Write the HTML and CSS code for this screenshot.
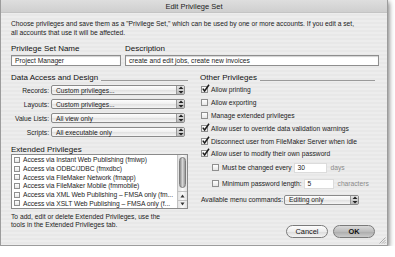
FILE: index.html
```html
<!DOCTYPE html>
<html lang="en">
<head>
  <meta charset="UTF-8">
  <title>Edit Privilege Set</title>
  <link rel="stylesheet" href="styles.css">
</head>
<body>
  <div class="window">
    <div class="titlebar">Edit Privilege Set</div>
    <div class="content">
      <p class="intro">Choose privileges and save them as a "Privilege Set," which can be used by one or more accounts. If you edit a set,<br>all accounts that use it will be affected.</p>

      <div class="names">
        <div class="field field--name">
          <span class="field__label">Privilege Set Name</span>
          <span class="field__box">Project Manager</span>
        </div>
        <div class="field field--desc">
          <span class="field__label">Description</span>
          <span class="field__box">create and edit jobs, create new invoices</span>
        </div>
      </div>

      <div class="columns">
        <div class="col col--left">
          <div class="section-head"><span>Data Access and Design</span><i class="section-head__rule"></i></div>
          <div class="popups">
            <div class="popup-row"><span class="popup-row__label">Records:</span><span class="select">Custom privileges...<b class="select__arrows"><svg width="6" height="8" viewBox="0 0 6 8"><path d="M3 0.5L5.5 3H0.5zM3 7.5L5.5 5H0.5z" fill="#222"/></svg></b></span></div>
            <div class="popup-row"><span class="popup-row__label">Layouts:</span><span class="select">Custom privileges...<b class="select__arrows"><svg width="6" height="8" viewBox="0 0 6 8"><path d="M3 0.5L5.5 3H0.5zM3 7.5L5.5 5H0.5z" fill="#222"/></svg></b></span></div>
            <div class="popup-row"><span class="popup-row__label">Value Lists:</span><span class="select">All view only<b class="select__arrows"><svg width="6" height="8" viewBox="0 0 6 8"><path d="M3 0.5L5.5 3H0.5zM3 7.5L5.5 5H0.5z" fill="#222"/></svg></b></span></div>
            <div class="popup-row"><span class="popup-row__label">Scripts:</span><span class="select">All executable only<b class="select__arrows"><svg width="6" height="8" viewBox="0 0 6 8"><path d="M3 0.5L5.5 3H0.5zM3 7.5L5.5 5H0.5z" fill="#222"/></svg></b></span></div>
          </div>

          <div class="section-head section-head--ext"><span>Extended Privileges</span></div>
          <div class="list">
            <div class="list__items">
              <div class="list__row"><span class="box"></span><span class="list__text">Access via Instant Web Publishing (fmiwp)</span></div>
              <div class="list__row"><span class="box"></span><span class="list__text">Access via ODBC/JDBC (fmxdbc)</span></div>
              <div class="list__row"><span class="box"></span><span class="list__text">Access via FileMaker Network (fmapp)</span></div>
              <div class="list__row"><span class="box"></span><span class="list__text">Access via FileMaker Mobile (fmmobile)</span></div>
              <div class="list__row"><span class="box"></span><span class="list__text">Access via XML Web Publishing – FMSA only (fm...</span></div>
              <div class="list__row"><span class="box"></span><span class="list__text">Access via XSLT Web Publishing – FMSA only (f...</span></div>
            </div>
            <div class="scroll">
              <div class="scroll__thumb"></div>
              <div class="scroll__btn"><svg width="5" height="4" viewBox="0 0 5 4"><path d="M2.5 0.5L4.5 3.5H0.5z" fill="#333"/></svg></div>
              <div class="scroll__btn"><svg width="5" height="4" viewBox="0 0 5 4"><path d="M2.5 3.5L4.5 0.5H0.5z" fill="#333"/></svg></div>
            </div>
          </div>
          <p class="note">To add, edit or delete Extended Privileges, use the<br>tools in the Extended Privileges tab.</p>
        </div>

        <div class="col col--right">
          <div class="section-head"><span>Other Privileges</span><i class="section-head__rule"></i></div>
          <div class="checks">
            <div class="check-row"><span class="box box--on"><svg width="9" height="9" viewBox="0 0 9 9"><path d="M1.8 4.6L3.6 7L8 0.8" fill="none" stroke="#1b1b1b" stroke-width="1.5"/></svg></span>Allow printing</div>
            <div class="check-row"><span class="box"></span>Allow exporting</div>
            <div class="check-row"><span class="box"></span>Manage extended privileges</div>
            <div class="check-row"><span class="box box--on"><svg width="9" height="9" viewBox="0 0 9 9"><path d="M1.8 4.6L3.6 7L8 0.8" fill="none" stroke="#1b1b1b" stroke-width="1.5"/></svg></span>Allow user to override data validation warnings</div>
            <div class="check-row"><span class="box box--on"><svg width="9" height="9" viewBox="0 0 9 9"><path d="M1.8 4.6L3.6 7L8 0.8" fill="none" stroke="#1b1b1b" stroke-width="1.5"/></svg></span>Disconnect user from FileMaker Server when idle</div>
            <div class="check-row"><span class="box box--on"><svg width="9" height="9" viewBox="0 0 9 9"><path d="M1.8 4.6L3.6 7L8 0.8" fill="none" stroke="#1b1b1b" stroke-width="1.5"/></svg></span>Allow user to modify their own password</div>
          </div>
          <div class="sub-row">
            <span class="box"></span><span class="sub-row__text">Must be changed every</span>
            <span class="num num--days">30</span><span class="unit">days</span>
          </div>
          <div class="sub-row sub-row--min">
            <span class="box"></span><span class="sub-row__text">Minimum password length:</span>
            <span class="num num--len">5</span><span class="unit">characters</span>
          </div>
          <div class="menu-row">
            <span>Available menu commands:</span>
            <span class="select select--menu">Editing only<b class="select__arrows"><svg width="6" height="8" viewBox="0 0 6 8"><path d="M3 0.5L5.5 3H0.5zM3 7.5L5.5 5H0.5z" fill="#222"/></svg></b></span>
          </div>
          <div class="buttons">
            <span class="btn">Cancel</span>
            <span class="btn btn--default">OK</span>
          </div>
        </div>
      </div>
    </div>
    <svg class="grip" width="7" height="7" viewBox="0 0 7 7"><path d="M6.5 0.5L0.5 6.5M6.5 3L3 6.5M6.5 5.3L5.3 6.5" stroke="#9a9a9a" stroke-width="0.8"/></svg>
  </div>
</body>
</html>
```

FILE: styles.css
```css
*, *::before, *::after {
  box-sizing: border-box;
}

body {
  margin: 0;
  background: #fff;
  font-family: "Liberation Sans", Arial, sans-serif;
  font-size: 6.7px;
  color: #1c1c1c;
}

.window {
  position: relative;
  width: 388px;
  height: 246px;
  display: flex;
  flex-direction: column;
  background: repeating-linear-gradient(#ededed 0 2px, #e8e8e8 2px 4px);
  border: 1px solid #9c9c9c;
  border-top: 0;
  box-shadow: 1px 2px 5px rgba(0, 0, 0, 0.55);
}

.titlebar {
  height: 13px;
  line-height: 13px;
  text-align: center;
  font-size: 7.5px;
  color: #222;
  background: linear-gradient(#dedede, #cfcfcf);
  border-bottom: 1px solid #c4c4c4;
}

.content {
  padding: 7px 8px 0 10px;
  display: flex;
  flex-direction: column;
}

.intro {
  margin: 0;
  line-height: 8.5px;
  white-space: nowrap;
}

.names {
  display: flex;
  gap: 4px;
  margin-top: 6.5px;
}

.field {
  display: flex;
  flex-direction: column;
  gap: 1.5px;
}

.field--name {
  width: 110px;
}

.field--desc {
  flex: 1;
}

.field__label {
  font-size: 8px;
  line-height: 10px;
  color: #111;
}

.field__box {
  height: 11px;
  line-height: 9px;
  padding: 0 3px;
  background: #fff;
  border: 1px solid #8e8e8e;
  box-shadow: inset 0 1px 1px rgba(0, 0, 0, 0.18);
}

.columns {
  display: flex;
  gap: 12px;
  margin-top: 7px;
}

.col--left {
  width: 177px;
}

.col--right {
  flex: 1;
  padding-right: 4px;
  display: flex;
  flex-direction: column;
}

.section-head {
  display: flex;
  align-items: flex-end;
  gap: 3px;
  height: 9px;
  line-height: 9px;
  font-size: 8px;
  color: #111;
}

.section-head__rule {
  flex: 1;
  margin-bottom: 1px;
  border-bottom: 1px solid #9a9a9a;
}

.section-head--ext {
  margin-top: 7.5px;
}

.popups {
  display: flex;
  flex-direction: column;
  gap: 4px;
  margin-top: 3px;
}

.popup-row {
  display: flex;
  align-items: center;
  gap: 2px;
  height: 10px;
}

.popup-row__label {
  width: 38px;
  text-align: right;
}

.select {
  width: 134px;
  height: 10px;
  display: flex;
  align-items: center;
  padding-left: 4px;
  border: 1px solid #8a8a8a;
  border-radius: 2px;
  background: linear-gradient(#fdfdfd, #f1f1f1 45%, #e2e2e2 55%, #f6f6f6);
}

.select__arrows {
  margin-left: auto;
  width: 8px;
  height: 8px;
  display: flex;
  align-items: center;
  justify-content: center;
  border-left: 1px solid #9a9a9a;
  background: linear-gradient(#e4e4e4, #b9b9b9);
}

.select--menu {
  width: 75px;
  margin-left: 1px;
}

.list {
  display: flex;
  height: 55px;
  margin-top: 0.5px;
  background: #fff;
  border: 1px solid #8a8a8a;
}

.list__items {
  flex: 1;
  min-width: 0;
  padding-top: 0.5px;
}

.list__row {
  display: flex;
  align-items: center;
  gap: 3px;
  height: 8.7px;
  padding-left: 2px;
}

.list__text {
  white-space: nowrap;
  letter-spacing: -0.05px;
}

.box {
  position: relative;
  flex: none;
  width: 7px;
  height: 7px;
  border: 1px solid #8f8f8f;
  background: linear-gradient(#fff, #e6e6e6);
}

.list .box {
  width: 6px;
  height: 6px;
}

.box svg {
  position: absolute;
  left: -1px;
  top: -3px;
}

.scroll {
  width: 10px;
  display: flex;
  flex-direction: column;
  border-left: 1px solid #c2c2c2;
  background: linear-gradient(90deg, #e2e2e2, #fafafa, #e2e2e2);
}

.scroll__thumb {
  flex: 1;
  margin: 2px 1px 3px;
  border-radius: 4px;
  border: 1px solid #7c7c7c;
  background: linear-gradient(90deg, #8c8c8c, #d6d6d6 50%, #9a9a9a);
}

.scroll__btn {
  height: 8.5px;
  display: flex;
  align-items: center;
  justify-content: center;
  border-top: 1px solid #c2c2c2;
}

.note {
  margin: 3.5px 0 0;
  line-height: 8.5px;
  white-space: nowrap;
}

.checks {
  margin-top: 1.6px;
}

.check-row {
  display: flex;
  align-items: center;
  gap: 3px;
  height: 12.8px;
  padding-left: 1px;
  white-space: nowrap;
}

.sub-row {
  display: flex;
  align-items: center;
  height: 12px;
  margin-top: 1.6px;
  padding-left: 12px;
  white-space: nowrap;
}

.sub-row--min {
  margin-top: 4px;
}

.sub-row__text {
  margin-left: 3px;
}

.num {
  height: 10px;
  line-height: 10px;
  padding-left: 4px;
  margin-left: 2px;
  background: #fff;
  box-shadow: inset 0 0 0 1px #dcdcdc;
}

.num--days {
  width: 33px;
}

.num--len {
  width: 30px;
}

.unit {
  margin-left: 4px;
  color: #8a8a8a;
}

.menu-row {
  display: flex;
  align-items: center;
  height: 12px;
  margin-top: 4px;
  padding-left: 1px;
  white-space: nowrap;
}

.buttons {
  display: flex;
  justify-content: flex-end;
  gap: 5px;
  margin-top: 19.5px;
}

.btn {
  width: 42px;
  height: 13px;
  line-height: 11px;
  text-align: center;
  font-size: 7.4px;
  color: #111;
  border: 1px solid #7a7a7a;
  border-radius: 7px;
  background: linear-gradient(#fdfdfd, #ececec 50%, #dadada 50%, #f4f4f4);
}

.btn--default {
  font-weight: bold;
  background: linear-gradient(#d9d9d9, #bcbcbc 50%, #aaaaaa 50%, #cbcbcb);
}

.grip {
  position: absolute;
  right: 1px;
  bottom: 1px;
}
```
